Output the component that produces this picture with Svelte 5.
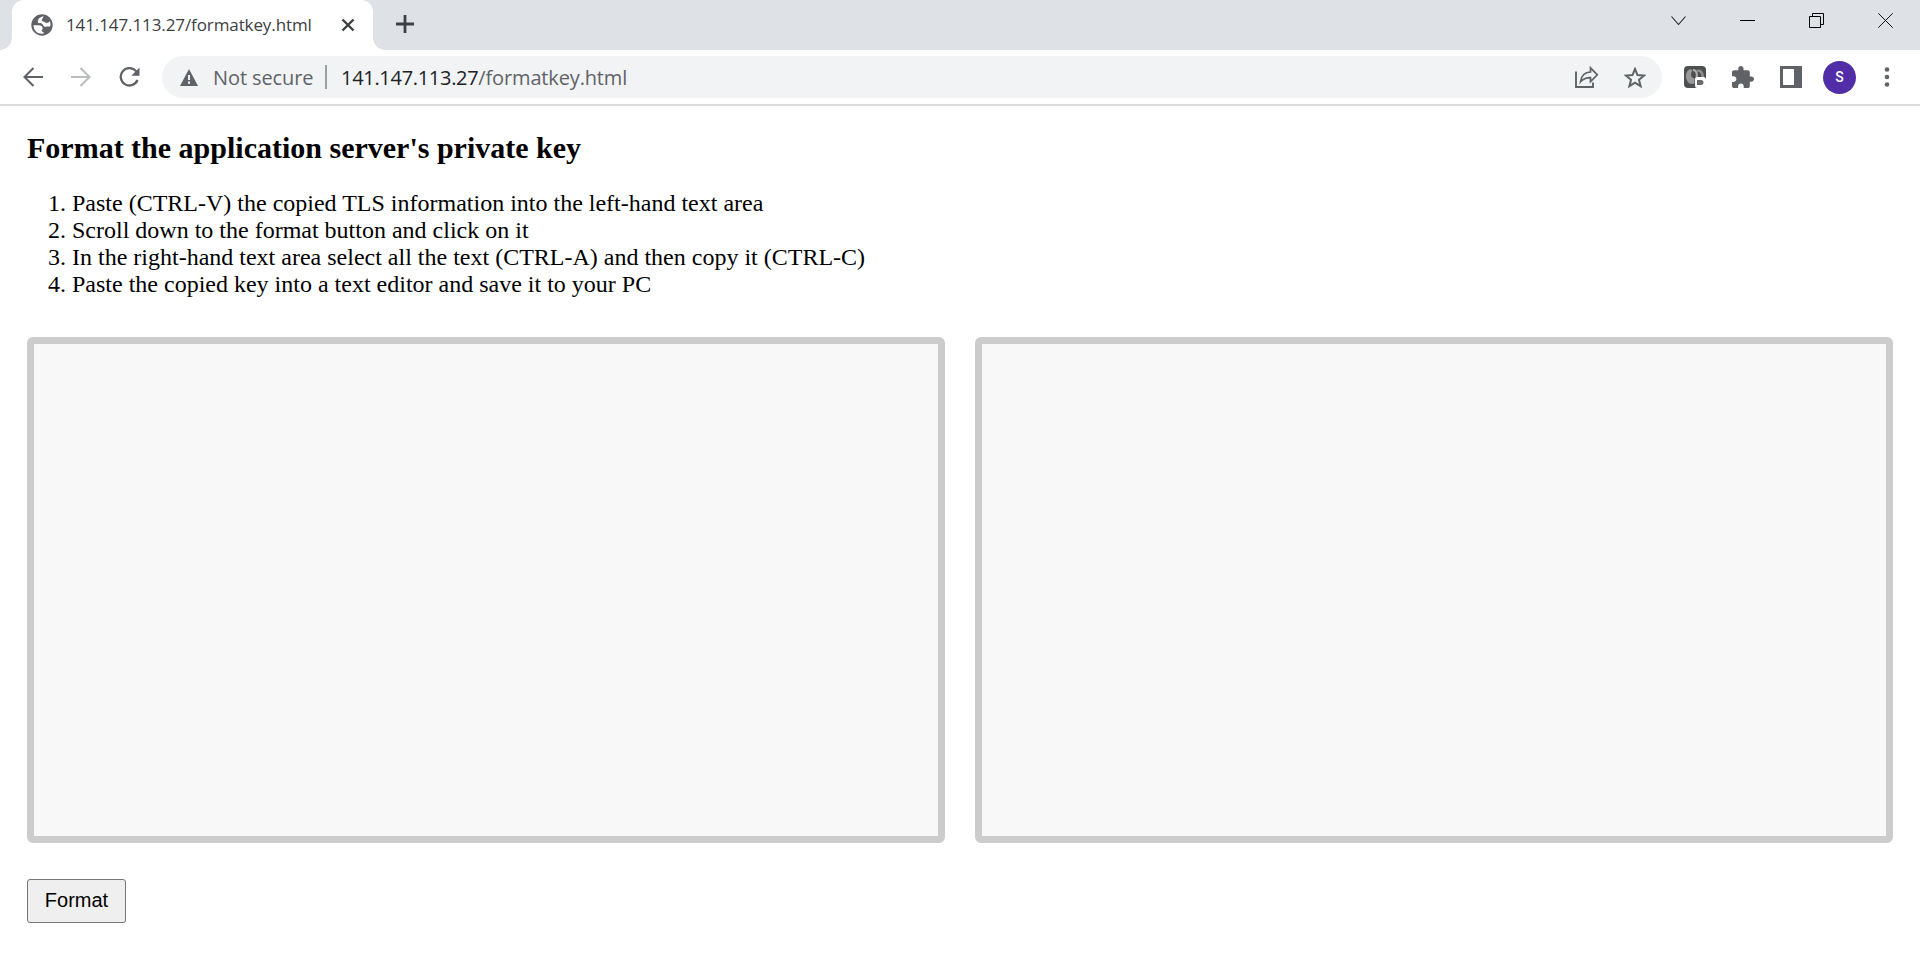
<script>
  const steps = [
    'Paste (CTRL-V) the copied TLS information into the left-hand text area',
    'Scroll down to the format button and click on it',
    'In the right-hand text area select all the text (CTRL-A) and then copy it (CTRL-C)',
    'Paste the copied key into a text editor and save it to your PC'
  ];
</script>

<div class="window">
  <header class="tabstrip">
    <div class="tab">
      <svg width="22" height="22" viewBox="0 0 22 22"><circle cx="11" cy="11" r="10.7" fill="#5f6368" /><path d="M12.500 2.300C9.500 2.800 6.800 5 6.800 7.600c0 2 2.300 1.600 3.800 1.800 1.600.3 1.200 2.400 2.600 3 1.600.6 3-.2 5.900.100.800-2 .3-4-.2-5.200-1.700 1.700-3.300 2-4.700 1.100-1.400-.9-3.200-.7-3.500-2.300-.2-1.300 1.800-1.800 1.800-3.800z" fill="#fff" /><path d="M2.500 11.200h5c2.400 0 4.200 1.300 4.200 3 0 1.300-.9 1.500-1 2.500 0 .9 1.600.9 2.500 2.600-5.500 1.500-10.500-2-10.700-8.100z" fill="#fff" /></svg>
      <span class="tab-title">141.147.113.27/formatkey.html</span>
      <svg class="tab-close" width="14" height="14" viewBox="0 0 14 14"><path d="M1.500 1.500l11 11M12.500 1.500l-11 11" stroke="#3c4043" stroke-width="2.400" /></svg>
    </div>
    <svg class="new-tab" width="18" height="18" viewBox="0 0 18 18"><path d="M9 0v18M0 9h18" stroke="#3c4043" stroke-width="2.800" /></svg>
    <div class="controls">
      <svg width="15" height="15" viewBox="0 0 15 15"><path d="M.5 3.500l7 8 7-8" fill="none" stroke="#222" stroke-width="1.100" /></svg>
      <svg width="15" height="15" viewBox="0 0 15 15"><path d="M0 7.500h15" stroke="#000" /></svg>
      <svg width="15" height="15" viewBox="0 0 15 15"><path d="M.5 3.500h11v11H.5zM3.500 3.500v-3h11v11h-3" fill="none" stroke="#000" /></svg>
      <svg width="15" height="15" viewBox="0 0 15 15"><path d="M.3.3l14.400 14.400M14.700.3L.3 14.700" stroke="#111" /></svg>
    </div>
  </header>

  <nav class="toolbar">
    <svg width="20" height="20" viewBox="0 0 20 20"><path d="M20 10H2M10.500 1L1.500 10l9 9" fill="none" stroke="#5f6368" stroke-width="2.100" /></svg>
    <svg width="20" height="20" viewBox="0 0 20 20"><path d="M0 10h18M9.500 1l9 9-9 9" fill="none" stroke="#babcbe" stroke-width="2.100" /></svg>
    <svg width="22" height="20" viewBox="0 0 22 20"><path d="M17.300 4.400A8.700 8.700 0 1 0 18.500 13" fill="none" stroke="#5f6368" stroke-width="2.300" /><path d="M20.500.5v8.200h-8.200z" fill="#5f6368" /></svg>
    <div class="omnibox">
      <svg width="18" height="17" viewBox="0 0 18 17"><path d="M9 0l9 17H0z" fill="#5f6368" /><path d="M9 6v5M9 12.500v2.200" stroke="#f1f3f4" stroke-width="2" /></svg>
      <span class="secure">Not secure</span>
      <span class="divider"></span>
      <span class="url"><span class="host">141.147.113.27</span><span class="path">/formatkey.html</span></span>
      <svg class="share" width="24" height="22" viewBox="0 0 24 22"><path d="M1 5.500V21h17v-4.500" fill="none" stroke="#5f6368" stroke-width="1.900" /><path d="M15.500 1.800V6C9.500 6.300 6.200 9.800 5.500 15.800c2.500-3 5.500-4.200 10-4.200v4L22.300 8.800z" fill="none" stroke="#5f6368" stroke-width="1.700" /></svg>
      <svg class="star" width="22" height="21" viewBox="0 0 22 21"><path d="M11 2l2.500 6.100 6.500.5-5 4.200 1.600 6.400L11 15.700l-5.600 3.500L7 12.800 2 8.600l6.500-.5z" fill="none" stroke="#5f6368" stroke-width="2" /></svg>
    </div>
    <div class="actions">
      <svg width="22" height="22" viewBox="0 0 22 22"><rect width="22" height="22" rx="4" fill="#4e4f50" /><path d="M5 3.500C1.500 6 1 12 3.500 15.500 5 18 8 18.500 10.500 17.500V12C7 13 6 7 8.500 4.500 7.500 3 6 3 5 3.500z" fill="#999" /><path d="M9 4c3.500 0 4.500 3.500 3.500 8" fill="none" stroke="#b0b0b0" stroke-width="2" /><path d="M12.500 4c4-2 7.500 1.500 7.500 7h-2.500c0-3-1.500-5-3.500-5z" fill="#8d8d8d" /><rect x="11" y="11" width="11" height="11" rx="2.500" fill="#fff" /><path d="M13 14h4.200c1.200 0 2.300 1.300 2.300 2.500S18.400 19 17.200 19H13z" fill="#6b6b6b" /></svg>
      <svg width="22" height="22" viewBox="2 1 21 21"><path d="M20.500 11H19V7c0-1.100-.9-2-2-2h-4V3.500C13 2.120 11.880 1 10.500 1S8 2.120 8 3.500V5H4c-1.100 0-1.990.9-1.990 2v3.800H3.500c1.490 0 2.700 1.210 2.700 2.700s-1.210 2.700-2.700 2.700H2V20c0 1.100.9 2 2 2h3.800v-1.500c0-1.490 1.210-2.700 2.700-2.700s2.700 1.210 2.700 2.700V22H17c1.100 0 2-.9 2-2v-4h1.500c1.380 0 2.500-1.120 2.500-2.500S21.880 11 20.500 11z" fill="#5f6368" /></svg>
      <svg width="22" height="22" viewBox="0 0 22 22"><path d="M0 0h22v22H0zM3 3v16h11V3z" fill="#5f6368" fill-rule="evenodd" /></svg>
      <span class="avatar">S</span>
      <svg width="6" height="20" viewBox="0 0 6 20"><circle cx="3" cy="2.500" r="2.300" fill="#5f6368" /><circle cx="3" cy="10" r="2.300" fill="#5f6368" /><circle cx="3" cy="17.500" r="2.300" fill="#5f6368" /></svg>
    </div>
  </nav>

  <main>
    <h1>Format the application server's private key</h1>
    <ol>
      {#each steps as step}
        <li>{step}</li>
      {/each}
    </ol>
    <div class="areas">
      <textarea aria-label="TLS information"></textarea>
      <textarea aria-label="Formatted key"></textarea>
    </div>
    <button>Format</button>
  </main>
</div>

<style>
  :global(body) { margin: 0; background: #fff; overflow: hidden; }
  .window { width: 1920px; height: 957px; background: #fff; font-family: 'Open Sans', sans-serif; overflow: hidden; }
  svg { display: block; flex: none; }
  .tabstrip { display: flex; height: 50px; background: #dee1e6; padding-left: 12px; box-sizing: border-box; }
  .tab { position: relative; display: flex; align-items: center; width: 361px; height: 50px; box-sizing: border-box; padding-left: 19px; background: #fff; border-radius: 12px 12px 0 0; }
  .tab::before, .tab::after { content: ''; position: absolute; bottom: 0; width: 12px; height: 12px; }
  .tab::before { left: -12px; background: radial-gradient(circle at 0 0, transparent 11.5px, #fff 12px); }
  .tab::after { right: -12px; background: radial-gradient(circle at 100% 0, transparent 11.5px, #fff 12px); }
  .tab-title { margin-left: 13px; font-size: 17px; line-height: 24px; letter-spacing: -0.1px; color: #3c4043; white-space: nowrap; width: 245px; }
  .tab-close { margin-left: 30px; }
  .new-tab { margin: 15px 0 0 23px; }
  .controls { display: flex; gap: 54px; margin: 13px 27px 0 auto; }
  .toolbar { display: flex; align-items: center; height: 56px; box-sizing: border-box; border-bottom: 2px solid #dadbdc; padding-left: 23px; }
  .toolbar > svg + svg { margin-left: 28px; }
  .omnibox { display: flex; align-items: center; width: 1500px; height: 42px; flex: none; margin-left: 21px; border-radius: 21px; background: #f1f3f4; box-sizing: border-box; padding: 0 16px 0 18px; font-size: 20px; color: #5f6368; }
  .secure { margin-left: 15px; width: 99px; letter-spacing: -0.1px; white-space: nowrap; }
  .divider { width: 2px; height: 24px; background: #9aa0a6; margin: 0 14px 0 13px; }
  .url { white-space: nowrap; }
  .host { color: #202124; letter-spacing: -0.3px; }
  .path { letter-spacing: -0.15px; }
  .share { margin-left: auto; }
  .star { margin-left: 25px; }
  .actions { display: flex; align-items: center; margin-left: 22px; gap: 26px; }
  .avatar { width: 33px; height: 33px; margin: 0 2px 0 -5px; border-radius: 50%; background: #512da8; color: #fff; font: 500 14px/33px Roboto, sans-serif; text-align: center; }
  main { padding: 0 27px; color: #000; font-family: 'Liberation Serif', serif; }
  h1 { margin: 26px 0 0; font-size: 30px; line-height: 32px; }
  ol { margin: 26px 0 0; padding-left: 45px; font-size: 24px; line-height: 27px; }
  .areas { display: flex; gap: 30px; margin-top: 39px; }
  textarea { flex: 1; height: 506px; box-sizing: border-box; border: 7px solid #ccc; border-radius: 6px; background: #f8f8f8; resize: none; }
  button { display: block; width: 99px; height: 44px; margin-top: 36px; padding: 0 0 2px; border: 1px solid #767676; border-radius: 3px; background: #efefef; color: #000; font: 20px 'Liberation Sans', sans-serif; }
</style>
